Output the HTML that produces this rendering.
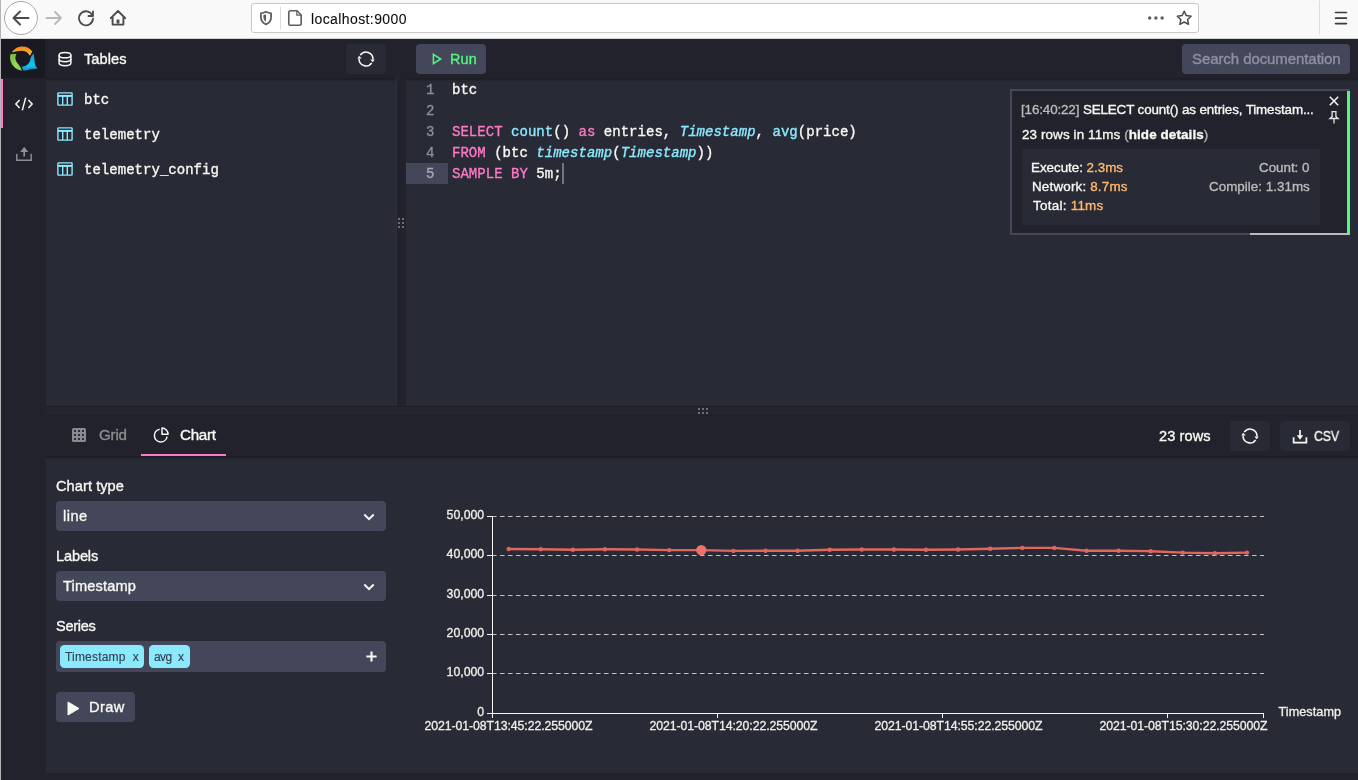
<!DOCTYPE html>
<html lang="en">
<head>
<meta charset="utf-8">
<title>QuestDB Web Console</title>
<style>
*{box-sizing:border-box;margin:0;padding:0}
html,body{width:1358px;height:780px;overflow:hidden;background:#21222c}
body{position:relative;font-family:"Liberation Sans",sans-serif;font-size:14px;color:#f8f8f2}
#root{position:absolute;left:0;top:0;width:1358px;height:780px;}
.abs{position:absolute}
.t{-webkit-text-stroke-width:.35px;will-change:transform;position:absolute;white-space:nowrap;line-height:20px;height:20px}
.mono{font-family:"Liberation Mono",monospace}
svg{position:absolute;overflow:visible}
/* browser chrome */
#chrome{left:0;top:0;width:1358px;height:39px;background:#f9f9fa;border-bottom:1px solid #d4d4d6}
#edge{left:0;top:0;width:1px;height:780px;background:#b4b4b6}
#urlbar{left:251px;top:3px;width:948px;height:30px;background:#fff;border:1px solid #c9c9cc;border-radius:3px}
/* app */
#side{left:1px;top:39px;width:45px;height:741px;background:#21222c}
#logo{left:1px;top:39px;width:44px;height:39px;background:#191a21}
#sel{left:1px;top:79px;width:2px;height:49px;background:#ff79c6}
#tbar{left:46px;top:39px;width:350px;height:39px;background:#21222c}
#tlist{left:46px;top:78px;width:350px;height:328px;background:#282a36}
#vsplit{left:396px;top:39px;width:10px;height:367px;background:#21222c}
#ebar{left:406px;top:39px;width:952px;height:39px;background:#21222c}
#editor{left:406px;top:78px;width:952px;height:328px;background:#282a36}
#hsplit{left:46px;top:406px;width:1312px;height:10px;background:#23242e}
#rbar{left:46px;top:416px;width:1312px;height:40px;background:#21222c}
#result{left:46px;top:456px;width:1312px;height:317px;background:#282a36}
.btn{position:absolute;background:#44475a;border-radius:4px}
.btn2{position:absolute;background:#282a36;border-radius:4px}
.shadow{position:absolute;height:4px;background:linear-gradient(rgba(0,0,0,.35),rgba(0,0,0,0))}

.tn{font-size:14px;letter-spacing:0}
.ln{font-size:14px;color:#8d8f99;width:9px}
.cl{font-size:14px}
.k{color:#ff79c6}.f{color:#8be9fd}

.n{font-size:13.4px}
.o{color:#ffb86c}
.g{color:#bbbbbb}
.lb{font-size:14.6px}
.tag{background:#8be9fd;border-radius:4.5px}
.tg{font-size:12.6px;color:#364052;-webkit-text-stroke-width:.15px}
</style>
</head>
<body>
<div id="root">
<div class="abs" id="chrome"></div>
<div class="abs" id="urlbar"></div>
<div class="t" id="url" style="-webkit-text-stroke-width:.1px;left:311px;top:9px;color:#0c0c0d;font-size:14px;letter-spacing:0.399px">localhost:9000</div>

<div class="abs" id="side"></div>
<div class="abs" id="logo"></div>
<div class="abs" id="sel"></div>
<div class="abs" id="tbar"></div>
<div class="abs" id="tlist"></div>
<div class="abs" id="vsplit"></div>
<div class="abs" id="ebar"></div>
<div class="abs" id="editor"></div>
<div class="abs" id="hsplit"></div>
<div class="abs" id="rbar"></div>
<div class="abs" id="result"></div>

<!-- ===== browser chrome icons ===== -->
<svg id="ic-chrome" style="left:0;top:0" width="1358" height="39" viewBox="0 0 1358 39" fill="none" stroke-linecap="round" stroke-linejoin="round">
  <circle cx="21" cy="18" r="16.5" fill="#fff" stroke="#a9a9ad" stroke-width="1"/>
  <path d="M28.5 18H14M20 11.5L13.5 18L20 24.5" stroke="#4a4a4f" stroke-width="2"/>
  <path d="M46.5 18H61M55 12L61 18L55 24" stroke="#b9b9bc" stroke-width="1.8"/>
  <path d="M92.3 15.2A7 7 0 1 0 93 18.6" stroke="#4a4a4f" stroke-width="1.8"/>
  <path d="M93 11.5V16H88.5" stroke="#4a4a4f" stroke-width="1.8"/>
  <path d="M110.8 18.2L118 11L125.2 18.2M112.6 17V24.6H123.4V17" stroke="#4a4a4f" stroke-width="1.9"/>
  <rect x="116.6" y="19.6" width="2.8" height="4" fill="#4a4a4f" stroke="none"/>
  <path d="M266 11.7C264 12.7 262.6 13.1 260.9 13.3V17C260.9 20.5 262.8 23 266 24.4C269.2 23 271.1 20.5 271.1 17V13.3C269.4 13.1 268 12.7 266 11.7Z" stroke="#5f5f63" stroke-width="1.8"/>
  <path d="M266 14.3V21.8C264.2 20.8 263.4 19.3 263.4 17.1V15.1C264.4 15 265.2 14.7 266 14.3Z" fill="#5f5f63" stroke="none"/>
  <path d="M280.5 7V29" stroke="#dcdcde" stroke-width="1"/>
  <path d="M290.5 10.8H297L301.2 15V23.5Q301.2 25.2 299.5 25.2H290.5Q288.8 25.2 288.8 23.5V12.5Q288.8 10.8 290.5 10.8Z" stroke="#5f5f63" stroke-width="1.6"/>
  <path d="M296.8 11.2V15.2H300.8" stroke="#5f5f63" stroke-width="1.2"/>
  <circle cx="1149.7" cy="18" r="1.75" fill="#5f5f63"/><circle cx="1155.9" cy="18" r="1.75" fill="#5f5f63"/><circle cx="1162.1" cy="18" r="1.75" fill="#5f5f63"/>
  <path d="M1184.2 11.2L1186.3 15.6L1191.1 16.2L1187.6 19.5L1188.5 24.3L1184.2 22L1179.9 24.3L1180.8 19.5L1177.3 16.2L1182.1 15.6Z" stroke="#4a4a4f" stroke-width="1.5"/>
  <path d="M1319.5 1V34.5" stroke="#dcdcde" stroke-width="1"/>
  <path d="M1335.5 12.5H1346.5M1335.5 18.1H1346.5M1335.5 23.6H1346.5" stroke="#3a3a3e" stroke-width="1.6"/>
</svg>

<!-- ===== sidebar ===== -->
<svg id="ic-logo" style="left:4px;top:40px" width="40" height="38" viewBox="0 0 40 38" fill="none">
  <defs>
    <linearGradient id="gO" x1="0" y1="0" x2="0" y2="1"><stop offset="0" stop-color="#f68a1c"/><stop offset="1" stop-color="#f9b233"/></linearGradient>
    <linearGradient id="gG" x1="0" y1="0" x2="1" y2="1"><stop offset="0" stop-color="#6fb744"/><stop offset=".6" stop-color="#9bd65a"/><stop offset="1" stop-color="#7cc24a"/></linearGradient>
    <linearGradient id="gB" x1="0" y1="0" x2="0" y2="1"><stop offset="0" stop-color="#149fdc"/><stop offset=".7" stop-color="#17c3f2"/><stop offset="1" stop-color="#1185c9"/></linearGradient>
  </defs>
  <path d="M8 12.5C10 8.6 14 6.5 18.5 6.5C22.6 6.5 26.1 8.4 28.4 11.6L25.9 15.7C24.2 12.7 21.5 10.9 18.5 10.8C15 10.7 12 11.6 8 12.5Z" fill="url(#gO)"/>
  <path d="M6.6 13.9L12.5 13.9C11.3 16 11.1 18 11.6 19.6C12.3 22 13.6 23.6 15.3 25.5C16.6 27 17.4 28.8 17.9 30.8C13 29.8 9 27 7.1 22.5C5.9 19.5 5.7 16.5 6.6 13.9Z" fill="url(#gG)"/>
  <path d="M29.6 13.4C30.1 15.5 30.4 18 30.5 20.5C30.6 24 31.2 26.6 33.5 28.3C31 29 28.5 28.9 26.5 29.3C24 29.8 22 30.7 19.5 30.7L17.7 26.7C20 26.6 22 25.8 23.5 24.5C25.3 22.9 26.3 20.9 26.4 19C26.5 17.3 27.8 15.3 29.6 13.4Z" fill="url(#gB)"/>
</svg>
<svg id="ic-code" style="left:14px;top:94px" width="20" height="20" viewBox="0 0 20 20" fill="none" stroke="#f8f8f2" stroke-width="1.5" stroke-linecap="butt" stroke-linejoin="miter">
  <path d="M5.6 6.1L1.9 10L5.6 13.9M14.4 6.1L18.1 10L14.4 13.9M11.7 3.6L8.3 16.4"/>
</svg>
<svg id="ic-upload" style="left:15px;top:145px" width="18" height="18" viewBox="0 0 18 18" fill="none" stroke="#8f9096" stroke-width="1.4">
  <path d="M1.8 8.8V15.2H16.2V8.8"/>
  <path d="M9.2 11.5V6" stroke-width="1.7"/>
  <path d="M5.2 7L9.2 1.8L13.2 7Z" fill="#8f9096" stroke="none"/>
</svg>

<!-- ===== tables panel ===== -->
<div class="shadow" style="left:46px;top:78px;width:350px"></div>
<svg id="ic-db" style="left:57px;top:51px" width="16" height="16" viewBox="0 0 16 16" fill="none" stroke="#f8f8f2" stroke-width="1.5">
  <ellipse cx="8" cy="4.2" rx="5.9" ry="2.6"/>
  <path d="M2.1 4.2V12.1C2.1 13.6 4.7 14.8 8 14.8C11.3 14.8 13.9 13.6 13.9 12.1V4.2"/>
  <path d="M2.1 8C2.1 9.5 4.7 10.7 8 10.7C11.3 10.7 13.9 9.5 13.9 8"/>
</svg>
<div class="t" id="t-tables" style="left:84px;top:49px;font-size:14.6px;letter-spacing:0.078px">Tables</div>
<div class="btn2" style="left:346px;top:44px;width:40px;height:30px"></div>
<svg class="ic-refresh" style="left:357px;top:50px" width="18" height="18" viewBox="0 0 18 18" fill="none" stroke="#f8f8f2" stroke-width="1.6">
  <path d="M3.3 5.1A6.9 6.9 0 0 1 15.9 9.4M14.7 12.9A6.9 6.9 0 0 1 2.1 8.6"/>
  <path d="M13.2 9.4H17.6L15.9 12.3Z M0.4 8.6H4.8L2.1 5.7Z" fill="#f8f8f2" stroke="none"/>
</svg>
<svg class="ic-table" style="left:57px;top:92px" width="16" height="14" viewBox="0 0 16 14" fill="none" stroke="#8be9fd" stroke-width="1.4">
  <rect x="0.9" y="0.9" width="14.2" height="12.2" rx="0.6"/><path d="M0.9 3.9H15.1" stroke-width="2"/><path d="M5.7 4V13M10.3 4V13"/>
</svg>
<svg class="ic-table" style="left:57px;top:127px" width="16" height="14" viewBox="0 0 16 14" fill="none" stroke="#8be9fd" stroke-width="1.4">
  <rect x="0.9" y="0.9" width="14.2" height="12.2" rx="0.6"/><path d="M0.9 3.9H15.1" stroke-width="2"/><path d="M5.7 4V13M10.3 4V13"/>
</svg>
<svg class="ic-table" style="left:57px;top:162px" width="16" height="14" viewBox="0 0 16 14" fill="none" stroke="#8be9fd" stroke-width="1.4">
  <rect x="0.9" y="0.9" width="14.2" height="12.2" rx="0.6"/><path d="M0.9 3.9H15.1" stroke-width="2"/><path d="M5.7 4V13M10.3 4V13"/>
</svg>
<div class="t mono tn" id="tn1" style="left:83.6px;top:90px;letter-spacing:.03px">btc</div>
<div class="t mono tn" id="tn2" style="left:83.6px;top:125px;letter-spacing:.03px">telemetry</div>
<div class="t mono tn" id="tn3" style="left:83.6px;top:160px;letter-spacing:.03px">telemetry_config</div>

<!-- splitter grips -->
<div class="abs" style="left:396px;top:78px;width:1px;height:328px;background:#2d2f3b"></div>
<svg style="left:398px;top:218px" width="6" height="10" viewBox="0 0 6 10" fill="#707074" shape-rendering="crispEdges"><rect x="0" y="0" width="2" height="2"/><rect x="4" y="0" width="2" height="2"/><rect x="0" y="4" width="2" height="2"/><rect x="4" y="4" width="2" height="2"/><rect x="0" y="8" width="2" height="2"/><rect x="4" y="8" width="2" height="2"/></svg>
<svg style="left:698px;top:408px" width="10" height="6" viewBox="0 0 10 6" fill="#707074" shape-rendering="crispEdges"><rect x="0" y="0" width="2" height="2"/><rect x="4" y="0" width="2" height="2"/><rect x="8" y="0" width="2" height="2"/><rect x="0" y="4" width="2" height="2"/><rect x="4" y="4" width="2" height="2"/><rect x="8" y="4" width="2" height="2"/></svg>
<div class="abs" style="left:46px;top:406px;width:1312px;height:1px;background:#1d1e27"></div>
<div class="abs" style="left:46px;top:415px;width:1312px;height:1px;background:#1e1f28"></div>

<!-- ===== editor bar ===== -->
<div class="shadow" style="left:406px;top:78px;width:952px"></div>
<div class="btn" style="left:416px;top:44px;width:70px;height:30px"></div>
<svg style="left:431px;top:52px" width="12" height="14" viewBox="0 0 12 14" fill="none" stroke="#50fa7b" stroke-width="1.5" stroke-linejoin="miter"><path d="M2.4 2.3L9.7 7L2.4 11.7Z"/></svg>
<div class="t" id="t-run" style="left:450px;top:49px;color:#50fa7b;font-size:14.4px;letter-spacing:0.122px">Run</div>
<div class="btn" style="left:1182px;top:44px;width:168px;height:30px"></div>
<div class="t" id="t-search" style="left:1192px;top:49px;color:#8f91a0;font-size:15px;letter-spacing:-0.080px">Search documentation</div>

<!-- ===== editor ===== -->
<div class="abs" style="left:406px;top:163px;width:42px;height:21px;background:#44475a"></div>
<div class="t mono ln" style="left:426px;top:80px">1</div>
<div class="t mono ln" style="left:426px;top:101px">2</div>
<div class="t mono ln" style="left:426px;top:122px">3</div>
<div class="t mono ln" style="left:426px;top:143px">4</div>
<div class="t mono ln" style="left:426px;top:164px;color:#a9aab0">5</div>
<div class="t mono cl" id="c1" style="left:451.7px;top:80px;letter-spacing:.03px">btc</div>
<div class="t mono cl" id="c3" style="left:451.7px;top:122px;letter-spacing:.03px"><span class="k">SELECT</span> <span class="f">count</span>() <span class="k">as</span> entries, <i class="f">Timestamp</i>, <span class="f">avg</span>(price)</div>
<div class="t mono cl" id="c4" style="left:451.7px;top:143px;letter-spacing:.03px"><span class="k">FROM</span> (btc <i class="f">timestamp</i>(<i class="f">Timestamp</i>))</div>
<div class="t mono cl" id="c5" style="left:451.7px;top:164px;letter-spacing:.03px"><span class="k">SAMPLE BY</span> 5m;</div>
<div class="abs" style="left:562px;top:163px;width:2px;height:21px;background:#74757f"></div>

<!-- ===== notification ===== -->
<div class="abs" id="notif" style="left:1010px;top:89px;width:340px;height:146px;background:#21222c;border:2px solid #44475a"></div>
<div class="abs" style="left:1347px;top:91px;width:3px;height:142px;background:#50fa7b"></div>
<div class="abs" style="left:1250px;top:233px;width:100px;height:2px;background:#bbbbbb"></div>
<div class="abs" id="ndetail" style="left:1022px;top:149px;width:298px;height:76px;background:#282a36"></div>
<div class="t n" id="n1" style="left:1021px;top:100px;letter-spacing:-0.128px"><span style="color:#bbbbbb">[16:40:22]</span> SELECT count() as entries, Timestam...</div>
<div class="t n" id="n2" style="left:1022px;top:125px;letter-spacing:0.119px">23 rows in 11ms <span style="color:#bbbbbb">(</span><b>hide details</b><span style="color:#bbbbbb">)</span></div>
<div class="t n" id="n3" style="left:1031px;top:158px;letter-spacing:-0.025px">Execute: <span class="o">2.3ms</span></div>
<div class="t n" id="n4" style="left:1032px;top:177px;letter-spacing:0.184px">Network: <span class="o">8.7ms</span></div>
<div class="t n" id="n5" style="left:1033px;top:196px;letter-spacing:0.276px">Total: <span class="o">11ms</span></div>
<div class="t n g" id="n6" style="right:49px;top:158px;letter-spacing:-0.033px">Count: 0</div>
<div class="t n g" id="n7" style="right:48px;top:177px;letter-spacing:0.024px">Compile: 1.31ms</div>
<svg style="left:1329px;top:96px" width="10" height="10" viewBox="0 0 10 10" fill="none" stroke="#f8f8f2" stroke-width="1.5"><path d="M0.8 0.8L9.2 9.2M9.2 0.8L0.8 9.2"/></svg>
<svg style="left:1328px;top:110px" width="12" height="14" viewBox="0 0 12 14" fill="none" stroke="#e4e4df" stroke-width="1.3"><path d="M3.4 1.6H8.6M4.1 1.6V6.6L2 8.5H10L7.9 6.6V1.6M6 8.5V13.5"/></svg>

<!-- ===== result bar ===== -->
<div class="shadow" style="left:46px;top:456px;width:1312px"></div>
<svg style="left:72px;top:428px" width="14" height="14" viewBox="0 0 14 14"><rect x="0" y="0" width="14" height="14" rx="1.6" fill="#8a8a8f"/><g fill="#21222c"><rect x="2.05" y="2.05" width="1.9" height="1.9"/><rect x="6.05" y="2.05" width="1.9" height="1.9"/><rect x="10.05" y="2.05" width="1.9" height="1.9"/><rect x="2.05" y="6.05" width="1.9" height="1.9"/><rect x="6.05" y="6.05" width="1.9" height="1.9"/><rect x="10.05" y="6.05" width="1.9" height="1.9"/><rect x="2.05" y="10.05" width="1.9" height="1.9"/><rect x="6.05" y="10.05" width="1.9" height="1.9"/><rect x="10.05" y="10.05" width="1.9" height="1.9"/></g></svg>
<div class="t" id="t-grid" style="left:99px;top:425px;color:#8e8e92;font-size:15.2px;letter-spacing:-0.240px">Grid</div>
<svg style="left:153px;top:427px" width="16" height="16" viewBox="0 0 16 16" fill="none" stroke="#f8f8f2" stroke-width="1.5"><path d="M6.7 2.2A6.4 6.4 0 1 0 14.1 9.6"/><path d="M9 1V7.3H15.1A6.3 6.3 0 0 0 9 1Z" stroke-linejoin="round"/></svg>
<div class="t" id="t-chart" style="left:180px;top:425px;font-size:15.2px;letter-spacing:-0.320px">Chart</div>
<div class="abs" style="left:141px;top:454px;width:85px;height:2px;background:#ff79c6"></div>
<div class="t" id="t-rows" style="left:1159px;top:426px;font-size:14.6px;letter-spacing:0.087px">23 rows</div>
<div class="btn2" style="left:1230px;top:421px;width:40px;height:30px"></div>
<svg class="ic-refresh" style="left:1241px;top:427px" width="18" height="18" viewBox="0 0 18 18" fill="none" stroke="#f8f8f2" stroke-width="1.6">
  <path d="M3.3 5.1A6.9 6.9 0 0 1 15.9 9.4M14.7 12.9A6.9 6.9 0 0 1 2.1 8.6"/>
  <path d="M13.2 9.4H17.6L15.9 12.3Z M0.4 8.6H4.8L2.1 5.7Z" fill="#f8f8f2" stroke="none"/>
</svg>
<div class="btn2" style="left:1280px;top:421px;width:70px;height:30px"></div>
<svg style="left:1292px;top:428.5px" width="16" height="16" viewBox="0 0 16 16" fill="none" stroke="#f8f8f2" stroke-width="1.7"><path d="M1.6 8.2V13.6H14.4V8.2"/><path d="M8 1V8.4"/><path d="M4.8 6.2L8 10.8L11.2 6.2Z" fill="#f8f8f2" stroke="none"/></svg>
<div class="t" id="t-csv" style="left:1314px;top:426px;font-size:14px;transform:scaleX(.87);transform-origin:0 50%">CSV</div>

<!-- ===== chart form ===== -->
<div class="t lb" id="l-type" style="left:56px;top:476px;letter-spacing:0.065px">Chart type</div>
<div class="btn" style="left:56px;top:501px;width:330px;height:30px"></div>
<div class="t lb" id="s-line" style="left:63px;top:506px;letter-spacing:0.495px">line</div>
<svg style="left:363px;top:513px" width="12" height="8" viewBox="0 0 12 8" fill="none" stroke="#f8f8f2" stroke-width="2"><path d="M1.3 1.5L6 6.2L10.7 1.5"/></svg>
<div class="t lb" id="l-labels" style="left:56px;top:546px;letter-spacing:-0.156px">Labels</div>
<div class="btn" style="left:56px;top:571px;width:330px;height:30px"></div>
<div class="t lb" id="s-ts" style="left:63px;top:576px;letter-spacing:0.154px">Timestamp</div>
<svg style="left:363px;top:583px" width="12" height="8" viewBox="0 0 12 8" fill="none" stroke="#f8f8f2" stroke-width="2"><path d="M1.3 1.5L6 6.2L10.7 1.5"/></svg>
<div class="t lb" id="l-series" style="left:56px;top:616px;letter-spacing:-0.300px">Series</div>
<div class="btn" style="left:56px;top:641px;width:330px;height:31px"></div>
<div class="abs tag" style="left:60px;top:645px;width:84px;height:23px"></div>
<div class="abs tag" style="left:149px;top:645px;width:41px;height:23px"></div>
<div class="t tg" id="tg1" style="left:65px;top:647px;font-size:12px;letter-spacing:0.182px">Timestamp <span style="margin-left:3.6px">x</span></div>
<div class="t tg" id="tg2" style="left:154px;top:647px;font-size:12px;letter-spacing:-0.583px">avg <span style="margin-left:3.6px">x</span></div>
<svg style="left:365.5px;top:650.5px" width="11" height="11" viewBox="0 0 11 11" fill="none" stroke="#f8f8f2" stroke-width="2.1"><path d="M5.5 0.4V10.6M0.4 5.5H10.6"/></svg>
<div class="btn" style="left:56px;top:692px;width:79px;height:30px"></div>
<svg style="left:66.5px;top:700.5px" width="13" height="15" viewBox="0 0 13 15"><path d="M1 1L12 7.5L1 14Z" fill="#f8f8f2" stroke="#f8f8f2" stroke-width="1" stroke-linejoin="round"/></svg>
<div class="t lb" id="t-draw" style="left:89px;top:697px;letter-spacing:0.383px">Draw</div>

<!-- ===== chart ===== -->
<svg id="chart" style="left:0;top:0;will-change:transform" width="1358" height="780" viewBox="0 0 1358 780" fill="none">
<path d="M492 516.5H1264" stroke="#c4c4c2" stroke-width="1" stroke-dasharray="4.5 3.5"/>
<path d="M487 516.5H492.5" stroke="#f8f8f2" stroke-width="1"/>
<path d="M492 555.5H1264" stroke="#c4c4c2" stroke-width="1" stroke-dasharray="4.5 3.5"/>
<path d="M487 555.5H492.5" stroke="#f8f8f2" stroke-width="1"/>
<path d="M492 595.5H1264" stroke="#c4c4c2" stroke-width="1" stroke-dasharray="4.5 3.5"/>
<path d="M487 595.5H492.5" stroke="#f8f8f2" stroke-width="1"/>
<path d="M492 634.5H1264" stroke="#c4c4c2" stroke-width="1" stroke-dasharray="4.5 3.5"/>
<path d="M487 634.5H492.5" stroke="#f8f8f2" stroke-width="1"/>
<path d="M492 673.5H1264" stroke="#c4c4c2" stroke-width="1" stroke-dasharray="4.5 3.5"/>
<path d="M487 673.5H492.5" stroke="#f8f8f2" stroke-width="1"/>
<path d="M492.5 516V718M487 713.5H1264M717.5 713V718M942.5 713V718M1167.5 713V718M1263.5 713V718" stroke="#f8f8f2" stroke-width="1"/>
<polyline points="508.7,549.0 540.8,549.3 572.9,549.8 605.0,549.3 637.1,549.5 669.2,550.1 701.3,550.1 733.4,550.9 765.5,550.8 797.6,550.7 829.7,549.8 861.8,549.5 893.9,549.5 926.0,549.8 958.1,549.5 990.2,548.7 1022.3,547.9 1054.4,547.9 1086.5,550.7 1118.6,550.7 1150.7,551.2 1182.8,552.6 1214.9,553.2 1247.0,552.6" stroke="#e2655e" stroke-width="2.4" stroke-linejoin="round" stroke-linecap="round"/>
<circle cx="508.7" cy="549.0" r="2.2" fill="#e2655e"/><circle cx="540.8" cy="549.3" r="2.2" fill="#e2655e"/><circle cx="572.9" cy="549.8" r="2.2" fill="#e2655e"/><circle cx="605.0" cy="549.3" r="2.2" fill="#e2655e"/><circle cx="637.1" cy="549.5" r="2.2" fill="#e2655e"/><circle cx="669.2" cy="550.1" r="2.2" fill="#e2655e"/><circle cx="701.3" cy="550.1" r="5.2" fill="#f0706a"/><circle cx="733.4" cy="550.9" r="2.2" fill="#e2655e"/><circle cx="765.5" cy="550.8" r="2.2" fill="#e2655e"/><circle cx="797.6" cy="550.7" r="2.2" fill="#e2655e"/><circle cx="829.7" cy="549.8" r="2.2" fill="#e2655e"/><circle cx="861.8" cy="549.5" r="2.2" fill="#e2655e"/><circle cx="893.9" cy="549.5" r="2.2" fill="#e2655e"/><circle cx="926.0" cy="549.8" r="2.2" fill="#e2655e"/><circle cx="958.1" cy="549.5" r="2.2" fill="#e2655e"/><circle cx="990.2" cy="548.7" r="2.2" fill="#e2655e"/><circle cx="1022.3" cy="547.9" r="2.2" fill="#e2655e"/><circle cx="1054.4" cy="547.9" r="2.2" fill="#e2655e"/><circle cx="1086.5" cy="550.7" r="2.2" fill="#e2655e"/><circle cx="1118.6" cy="550.7" r="2.2" fill="#e2655e"/><circle cx="1150.7" cy="551.2" r="2.2" fill="#e2655e"/><circle cx="1182.8" cy="552.6" r="2.2" fill="#e2655e"/><circle cx="1214.9" cy="553.2" r="2.2" fill="#e2655e"/><circle cx="1247.0" cy="552.6" r="2.2" fill="#e2655e"/>
<g font-family="Liberation Sans, sans-serif" font-size="12.3" fill="#f0f0ea" stroke="#f0f0ea" stroke-width=".3">
<text x="484.2" y="519.0" text-anchor="end">50,000</text>
<text x="484.2" y="558.0" text-anchor="end">40,000</text>
<text x="484.2" y="598.0" text-anchor="end">30,000</text>
<text x="484.2" y="637.0" text-anchor="end">20,000</text>
<text x="484.2" y="676.0" text-anchor="end">10,000</text>
<text x="484.2" y="716.0" text-anchor="end">0</text>
<text x="424.5" y="730.2" textLength="168" lengthAdjust="spacing">2021-01-08T13:45:22.255000Z</text>
<text x="649.5" y="730.2" textLength="168" lengthAdjust="spacing">2021-01-08T14:20:22.255000Z</text>
<text x="874.5" y="730.2" textLength="168" lengthAdjust="spacing">2021-01-08T14:55:22.255000Z</text>
<text x="1099.5" y="730.2" textLength="168" lengthAdjust="spacing">2021-01-08T15:30:22.255000Z</text>
<text x="1278.5" y="716.2" font-size="12.6" textLength="62.5" lengthAdjust="spacing">Timestamp</text>
</g>
</svg>
<div class="abs" id="edge"></div>
</div>
</body>
</html>
